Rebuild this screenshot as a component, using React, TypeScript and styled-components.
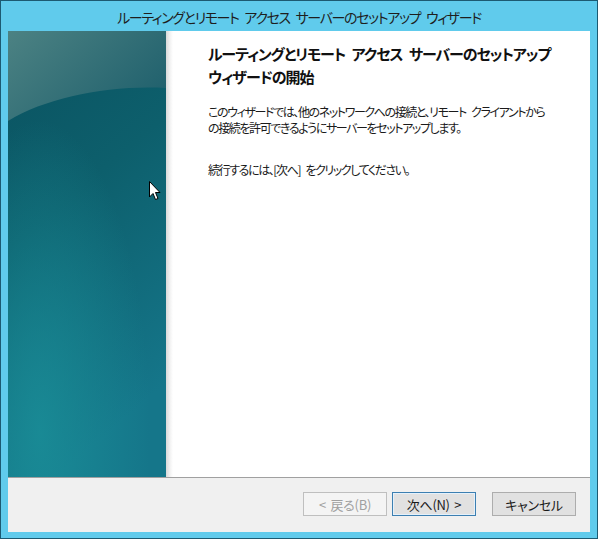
import styled, { createGlobalStyle } from 'styled-components';

const GlobalStyle = createGlobalStyle`
  html, body {
    margin: 0;
    padding: 0;
    background: #ffffff;
  }
  body {
    font-family: "Noto Sans CJK JP", "Noto Sans", sans-serif;
  }
`;

const Window = styled.div`
  position: relative;
  width: 598px;
  height: 539px;
  box-sizing: border-box;
  border: 1px solid #1c5a72;
  background: #60cbec;
  display: flex;
  flex-direction: column;
`;

const TitleBar = styled.div`
  height: 29px;
  display: flex;
  align-items: center;
  justify-content: center;
  font-size: 14px;
  letter-spacing: -1.35px;
  word-spacing: 4px;
  color: #1e1e1e;
  font-feature-settings: "palt";
  padding-top: 1px;
  white-space: nowrap;
`;

const Frame = styled.div`
  flex: 1;
  margin: 0 7px 6px 7px;
  display: flex;
  flex-direction: column;
  background: #ffffff;
`;

const Body = styled.div`
  height: 446px;
  display: flex;
  border-bottom: 1px solid #a0a0a0;
`;

const SidePanel = styled.div`
  width: 158px;
  flex: none;
  overflow: hidden;
  svg {
    display: block;
  }
`;

const Shadow = styled.div`
  width: 7px;
  flex: none;
  background: linear-gradient(to right, #d9d9d9, #f3f3f3 60%, #ffffff);
`;

const Main = styled.div`
  flex: 1;
  padding: 11px 10px 0 35px;
  font-feature-settings: "palt";
  color: #1a1a1a;
  white-space: nowrap;
`;

const Heading = styled.h1`
  margin: 0;
  font-size: 15px;
  letter-spacing: -1.05px;
  word-spacing: 4px;
  font-weight: 700;
  line-height: 23px;
  color: #111111;
`;

const Paragraph = styled.p<{ $gap: number }>`
  margin: ${(p) => p.$gap}px 0 0 0;
  font-size: 12px;
  letter-spacing: -1.4px;
  word-spacing: 4px;
  line-height: 16px;
`;

const Footer = styled.div`
  flex: 1;
  background: #f0f0f0;
  display: flex;
  align-items: center;
  justify-content: flex-end;
  padding-right: 14px;
  padding-bottom: 2px;
`;

const Button = styled.button<{ $variant?: 'default' | 'disabled' | 'normal'; $space?: number }>`
  width: 84px;
  height: 24px;
  margin-left: ${(p) => p.$space ?? 0}px;
  box-sizing: border-box;
  font-family: "Noto Sans CJK JP", "Noto Sans", sans-serif;
  font-feature-settings: "palt";
  font-size: 13px;
  letter-spacing: -0.3px;
  word-spacing: 2px;
  padding: 0;
  border: 1px solid
    ${(p) => (p.$variant === 'default' ? '#3c7fb1' : p.$variant === 'disabled' ? '#bfbfbf' : '#adadad')};
  background: ${(p) => (p.$variant === 'disabled' ? '#f4f4f4' : '#e1e1e1')};
  color: ${(p) => (p.$variant === 'disabled' ? '#a0a0a0' : '#1a1a1a')};
  box-shadow: ${(p) => (p.$variant === 'default' ? 'inset 0 0 0 1px #e5f1fb' : 'none')};
`;

const Cursor = styled.svg`
  position: absolute;
  left: 148px;
  top: 180px;
`;

const SideArt = () => (
  <svg width="158" height="446" viewBox="0 0 158 446">
    <defs>
      <linearGradient id="base" x1="0" y1="0" x2="0.3" y2="1">
        <stop offset="0" stopColor="#0a5260" />
        <stop offset="0.45" stopColor="#0d5f6c" />
        <stop offset="1" stopColor="#15768a" />
      </linearGradient>
      <linearGradient id="top" x1="0" y1="0" x2="1" y2="0.6">
        <stop offset="0" stopColor="#4c8283" />
        <stop offset="1" stopColor="#22626e" />
      </linearGradient>
      <radialGradient id="glow" cx="0.2" cy="0.9" r="0.7">
        <stop offset="0" stopColor="#1a8e98" stopOpacity="0.85" />
        <stop offset="1" stopColor="#1a8e98" stopOpacity="0" />
      </radialGradient>
    </defs>
    <rect width="158" height="446" fill="url(#base)" />
    <rect width="158" height="446" fill="url(#glow)" />
    <path d="M0 0 H158 V57 C100 54 40 66 0 90 Z" fill="url(#top)" />
  </svg>
);

const App = () => {
  return (
    <>
      <GlobalStyle />
      <Window>
        <TitleBar>ルーティングとリモート アクセス サーバーのセットアップ ウィザード</TitleBar>
        <Frame>
          <Body>
            <SidePanel>
              <SideArt />
            </SidePanel>
            <Shadow />
            <Main>
              <Heading>
                ルーティングとリモート アクセス サーバーのセットアップ
                <br />
                ウィザードの開始
              </Heading>
              <Paragraph $gap={16}>
                このウィザードでは、他のネットワークへの接続と、リモート クライアントから
                <br />
                の接続を許可できるようにサーバーをセットアップします。
              </Paragraph>
              <Paragraph $gap={26}>続行するには、[次へ] をクリックしてください。</Paragraph>
            </Main>
          </Body>
          <Footer>
            <Button $variant="disabled" disabled>
              &lt; 戻る(B)
            </Button>
            <Button $variant="default" $space={5}>
              次へ(N) &gt;
            </Button>
            <Button $variant="normal" $space={16}>
              キャンセル
            </Button>
          </Footer>
        </Frame>
        <Cursor width="12" height="20" viewBox="0 0 12 20">
          <path d="M0.5 0.5 V16 L4 12.5 L6.5 18.5 L9 17.5 L6.5 11.5 H11 Z" fill="#ffffff" stroke="#000000" strokeWidth="1" />
        </Cursor>
      </Window>
    </>
  );
};

export default App;
